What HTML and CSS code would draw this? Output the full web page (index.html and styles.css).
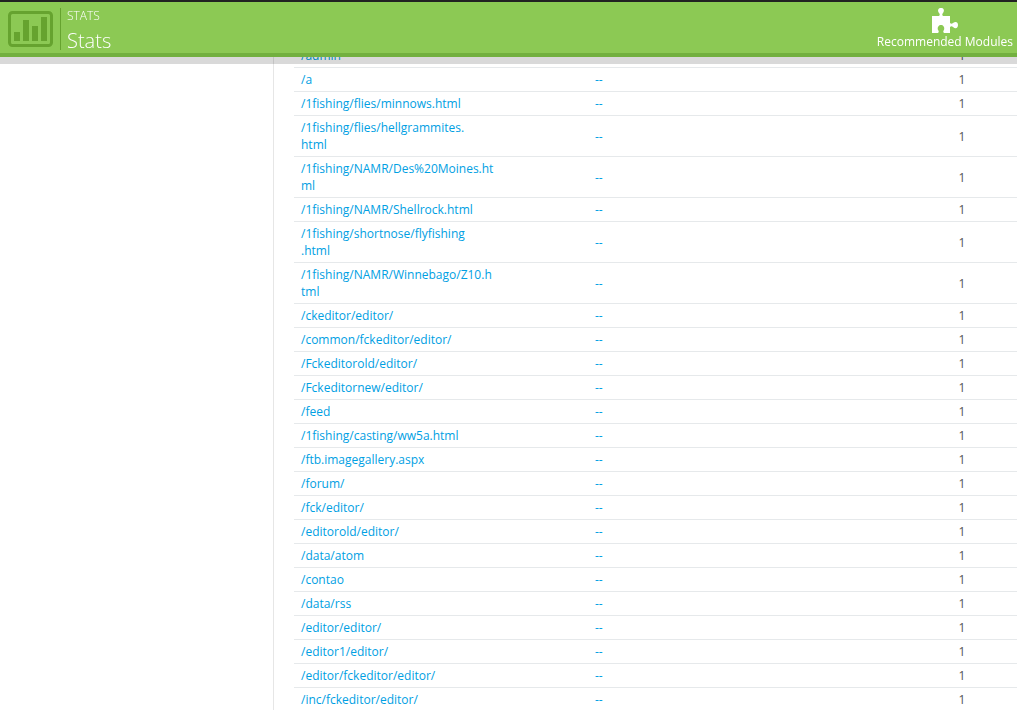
FILE: index.html
```html
<!DOCTYPE html>
<html lang="en">
<head>
    <meta charset="UTF-8">
    <meta name="viewport" content="width=device-width, initial-scale=1.0">
    <title>Stats</title>
    <link rel="stylesheet" href="styles.css">
</head>
<body>
    <header class="page-head">
        <div class="toolbar">
            <svg class="stats-icon" width="45" height="36" viewBox="0 0 45 36" aria-hidden="true">
                <rect x="1.5" y="1.5" width="42" height="33" rx="3" fill="none" stroke="currentColor" stroke-width="3"/>
                <path fill="currentColor" d="M6 21h6v9H6zM15 9h6v21h-6zM24 15h6v15h-6zM33 6h6v24h-6z"/>
            </svg>
            <div class="titles">
                <div class="breadcrumb">STATS</div>
                <h1>Stats</h1>
            </div>
            <a class="modules" href="#">
                <svg width="26" height="25" viewBox="0 0 26 25" aria-hidden="true">
                    <path fill="currentColor" d="M0 8h7c1-1 1-2 0-3C5 2 6.500 0 9 0s4 2 2 5c-1 1-1 2 0 3h7v7c1 1 2 1 3 0 3-2 5-.5 5 2s-2 4.500-5 2c-1-1-2-1-3 0v6h-6c-1-1-1-2 0-3 1-3-1-5-3-5s-4 2-3 5c1 1 1 2 0 3H0z"/>
                </svg>
                <span>Recommended Modules</span>
            </a>
        </div>
    </header>

    <div class="layout">
        <aside class="sidebar"></aside>
        <main class="content">
            <table class="pages">
                <colgroup>
                    <col class="col-page">
                    <col>
                    <col class="col-count">
                </colgroup>
                <tbody>
                    <tr><td><a href="#">/admin</a></td><td><a href="#">--</a></td><td>1</td></tr>
                    <tr><td><a href="#">/a</a></td><td><a href="#">--</a></td><td>1</td></tr>
                    <tr><td><a href="#">/1fishing/flies/minnows.html</a></td><td><a href="#">--</a></td><td>1</td></tr>
                    <tr><td><a href="#">/1fishing/flies/hellgrammites.<br>html</a></td><td><a href="#">--</a></td><td>1</td></tr>
                    <tr><td><a href="#">/1fishing/NAMR/Des%20Moines.ht<br>ml</a></td><td><a href="#">--</a></td><td>1</td></tr>
                    <tr><td><a href="#">/1fishing/NAMR/Shellrock.html</a></td><td><a href="#">--</a></td><td>1</td></tr>
                    <tr><td><a href="#">/1fishing/shortnose/flyfishing<br>.html</a></td><td><a href="#">--</a></td><td>1</td></tr>
                    <tr><td><a href="#">/1fishing/NAMR/Winnebago/Z10.h<br>tml</a></td><td><a href="#">--</a></td><td>1</td></tr>
                    <tr><td><a href="#">/ckeditor/editor/</a></td><td><a href="#">--</a></td><td>1</td></tr>
                    <tr><td><a href="#">/common/fckeditor/editor/</a></td><td><a href="#">--</a></td><td>1</td></tr>
                    <tr><td><a href="#">/Fckeditorold/editor/</a></td><td><a href="#">--</a></td><td>1</td></tr>
                    <tr><td><a href="#">/Fckeditornew/editor/</a></td><td><a href="#">--</a></td><td>1</td></tr>
                    <tr><td><a href="#">/feed</a></td><td><a href="#">--</a></td><td>1</td></tr>
                    <tr><td><a href="#">/1fishing/casting/ww5a.html</a></td><td><a href="#">--</a></td><td>1</td></tr>
                    <tr><td><a href="#">/ftb.imagegallery.aspx</a></td><td><a href="#">--</a></td><td>1</td></tr>
                    <tr><td><a href="#">/forum/</a></td><td><a href="#">--</a></td><td>1</td></tr>
                    <tr><td><a href="#">/fck/editor/</a></td><td><a href="#">--</a></td><td>1</td></tr>
                    <tr><td><a href="#">/editorold/editor/</a></td><td><a href="#">--</a></td><td>1</td></tr>
                    <tr><td><a href="#">/data/atom</a></td><td><a href="#">--</a></td><td>1</td></tr>
                    <tr><td><a href="#">/contao</a></td><td><a href="#">--</a></td><td>1</td></tr>
                    <tr><td><a href="#">/data/rss</a></td><td><a href="#">--</a></td><td>1</td></tr>
                    <tr><td><a href="#">/editor/editor/</a></td><td><a href="#">--</a></td><td>1</td></tr>
                    <tr><td><a href="#">/editor1/editor/</a></td><td><a href="#">--</a></td><td>1</td></tr>
                    <tr><td><a href="#">/editor/fckeditor/editor/</a></td><td><a href="#">--</a></td><td>1</td></tr>
                    <tr><td><a href="#">/inc/fckeditor/editor/</a></td><td><a href="#">--</a></td><td>1</td></tr>
                </tbody>
            </table>
        </main>
    </div>
</body>
</html>
```

FILE: styles.css
```css
* {
    box-sizing: border-box;
}
body {
    margin: 0;
    font-family: "Open Sans", "Liberation Sans", sans-serif;
    font-size: 12px;
    line-height: 17px;
    color: #555;
    background: #fff;
}
a {
    color: #00a0e3;
    text-decoration: none;
}

/* header stays above the scrolled table */
.page-head {
    position: fixed;
    top: 0;
    left: 0;
    right: 0;
    border-top: 2px solid #222;
    border-bottom: 7px solid rgba(0, 0, 0, 0.15);
}
.toolbar {
    display: flex;
    align-items: center;
    gap: 7px;
    height: 55px;
    padding: 2px 4px 0 8px;
    background: #8cc954;
    border-bottom: 4px solid #72b03f;
    color: #fff;
}
.stats-icon {
    color: #66a32f;
}
.titles {
    height: 42px;
    padding-left: 6px;
    border-left: 1px solid #66a32f;
}
.breadcrumb {
    line-height: 16px;
    font-weight: 300;
}
h1 {
    margin: 0;
    font-size: 20px;
    line-height: 34px;
    font-weight: 300;
}
.modules {
    display: flex;
    flex-direction: column;
    align-items: center;
    margin-left: auto;
    color: #fff;
}

.layout {
    display: flex;
    min-height: 100vh;
    padding-top: 43px;
}
.sidebar {
    width: 274px;
    border-right: 1px solid #e6e6e6;
}
.content {
    flex: 1;
    padding-left: 20px;
}
.pages {
    width: 100%;
    table-layout: fixed;
    border-collapse: collapse;
}
.col-page {
    width: 294px;
}
.col-count {
    width: 110px;
}
.pages td {
    padding: 3px 7px;
    border-top: 1px solid #e6e9eb;
    vertical-align: middle;
}
.pages td:last-child {
    text-align: center;
}
```
